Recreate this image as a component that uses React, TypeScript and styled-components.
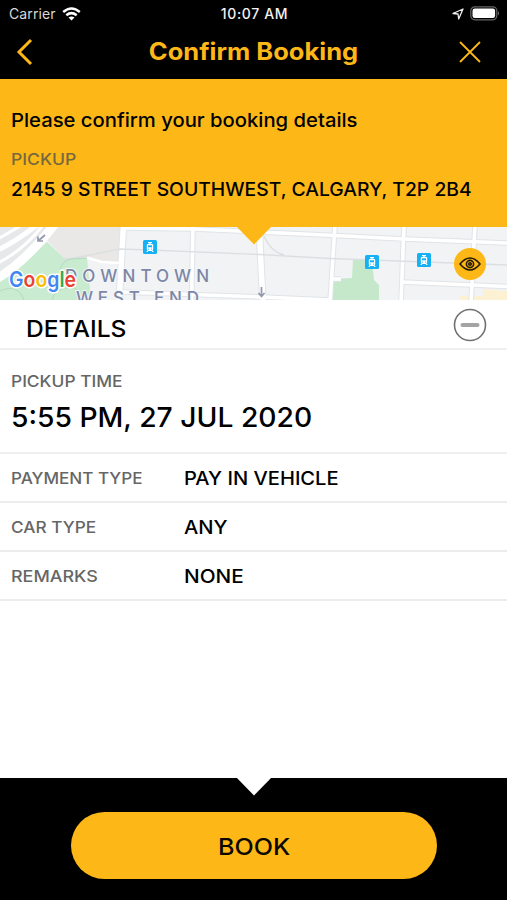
import styled, { createGlobalStyle } from "styled-components";

const YELLOW = "#fdb817";

const GlobalStyle = createGlobalStyle`
  * { box-sizing: border-box; }
  body { margin: 0; background: #fff; }
`;

const Screen = styled.div`
  width: 507px;
  height: 900px;
  display: flex;
  flex-direction: column;
  overflow: hidden;
  background: #fff;
  color: #000;
  font-family: Inter, "Liberation Sans", sans-serif;
`;

const Label = styled.span<{
  $size: number;
  $track?: number;
  $stretch?: number;
  $center?: boolean;
  $weight?: number;
  $color?: string;
}>`
  display: inline-block;
  font-size: ${(p) => p.$size}px;
  line-height: 24px;
  font-weight: ${(p) => p.$weight ?? 500};
  letter-spacing: ${(p) => p.$track ?? 0}px;
  color: ${(p) => p.$color ?? "inherit"};
  transform: scaleX(${(p) => p.$stretch ?? 1});
  transform-origin: ${(p) => (p.$center ? "center" : "left")};
  white-space: nowrap;
`;

const Header = styled.header`
  height: 79px;
  flex: none;
  background: #000;
`;

const StatusBar = styled.div`
  height: 27px;
  padding: 0 7px 0 9px;
  display: grid;
  grid-template-columns: 1fr auto 1fr;
  align-items: center;
  color: #f2f2f2;
`;

const StatusGroup = styled.div<{ $end?: boolean }>`
  display: flex;
  align-items: center;
  gap: 6px;
  justify-content: ${(p) => (p.$end ? "flex-end" : "flex-start")};
`;

const TitleBar = styled.div`
  height: 50px;
  padding: 0 26px 0 15px;
  display: grid;
  grid-template-columns: 60px 1fr 49px;
  align-items: center;
  text-align: center;
`;

const IconButton = styled.button<{ $end?: boolean }>`
  border: 0;
  padding: 0;
  background: none;
  display: flex;
  justify-content: ${(p) => (p.$end ? "flex-end" : "flex-start")};
`;

const Summary = styled.section`
  position: relative;
  z-index: 1;
  height: 148px;
  flex: none;
  padding: 30px 11px 0;
  background: ${YELLOW};
  display: flex;
  flex-direction: column;
  align-items: flex-start;
`;

const SummaryGap = styled.div<{ $h: number }>`
  height: ${(p) => p.$h}px;
`;

const Notch = styled.svg<{ $top: number }>`
  position: absolute;
  top: ${(p) => p.$top}px;
  left: 236px;
`;

const MapStrip = styled.section`
  position: relative;
  height: 73px;
  flex: none;
  overflow: hidden;
  svg { display: block; }
`;

const EyeButton = styled.button`
  position: absolute;
  left: 454px;
  top: 21px;
  width: 32px;
  height: 32px;
  padding: 0;
  border: 0;
  border-radius: 50%;
  background: ${YELLOW};
  display: grid;
  place-items: center;
`;

const DetailsBar = styled.div`
  height: 50px;
  flex: none;
  padding: 8px 20px 0 26px;
  border-bottom: 2px solid #f0f0f0;
  display: flex;
  justify-content: space-between;
  align-items: flex-start;
`;

const DetailsTitle = styled.h2`
  margin: 0;
  padding-top: 9px;
  display: flex;
`;

const PickupTime = styled.div`
  height: 104px;
  flex: none;
  padding: 19px 11px 0;
  border-bottom: 2px solid #efefef;
  display: flex;
  flex-direction: column;
  align-items: flex-start;
  gap: 12px;
`;

const Row = styled.div`
  height: 49px;
  flex: none;
  padding: 1px 11px 0;
  border-bottom: 2px solid #ececec;
  display: grid;
  grid-template-columns: 173px 1fr;
  align-items: center;
  justify-items: start;
`;

const Spacer = styled.div`
  flex: 1;
`;

const Footer = styled.footer`
  position: relative;
  height: 122px;
  flex: none;
  padding: 34px 70px 21px 71px;
  background: #000;
  display: flex;
`;

const BookButton = styled.button`
  flex: 1;
  border: 0;
  padding: 3px 0 0;
  border-radius: 34px;
  background: ${YELLOW};
  color: #0a0800;
  font-family: inherit;
`;

const Roads = styled.g<{ $grow: number; $c: string }>`
  fill: none;
  stroke: ${(p) => p.$c};
  stroke-width: ${(p) => 3.6 + p.$grow}px;
  .wide { stroke-width: ${(p) => 5.5 + p.$grow}px; }
`;

const MapText = styled.text`
  font: 500 17px Inter, sans-serif;
  fill: #7d86a5;
  stroke: #f4f6f8;
  stroke-width: 2px;
  paint-order: stroke;
`;

const LogoText = styled.text`
  font: 600 21.5px Inter, sans-serif;
  stroke: #fff;
  stroke-width: 3px;
  stroke-linejoin: round;
  paint-order: stroke;
`;

const Station = ({ x, y }: { x: number; y: number }) => (
  <g transform={`translate(${x} ${y})`}>
    <rect width="14" height="14" rx="1.5" fill="#16b0f4" />
    <path d="M5 2h4v1.2H7.6V4H9.6l.6 1v4.3L9.5 10.3l1.2 1.7H9.3l-.6-1H5.3l-.6 1H3.3l1.2-1.7-.7-1V5l.6-1h2V3.2H5z" fill="#fff" />
    <path d="M5 5.3h4v2H5z" fill="#16b0f4" />
    <circle cx="5.5" cy="9" r=".6" fill="#16b0f4" />
    <circle cx="8.5" cy="9" r=".6" fill="#16b0f4" />
  </g>
);

const roadLines = (
  <>
    <path d="M124 1L194 2L260 5L335 8.500L404 12L507 16" />
    <path d="M193 -2L191.500 76M335 -2L330 76M404 -2L401 76M475 -2L471 76" />
    <path d="M121 65L262 70L330 73M402 55L507 59.500M332 52H341" />
    <path className="wide" d="M123.500 -2L119 76M259 -2L263 76" />
  </>
);

const CityMap = () => (
  <svg width="507" height="73" viewBox="0 0 507 73">
    <rect width="507" height="73" fill="#f1f3f4" />
    <path d="M0 0H121V36L103 35L88 31L64 31L48 14L40 0Z" fill="#e9e8e6" />
    <path d="M0 0H55L47 13L22 36L0 56Z" fill="#e7e8ea" />
    <path d="M47 15L64 31L87 31L91 73H0V53L22 36Z" fill="#c9ebcf" />
    <path d="M353 33H372L374 53L379 58V73H333V52L352 51Z" fill="#c5e8cb" />
    <path d="M483 62L507 64V73H459V69H483Z" fill="#fcf2d3" />
    <Roads $grow={2} $c="#e0e4e8">{roadLines}</Roads>
    <Roads $grow={0} $c="#ffffff">{roadLines}</Roads>
    <g fill="none" stroke="#fff" strokeLinecap="round">
      <path d="M-2 51Q25 35 54 -2" strokeWidth="9" />
      <path d="M-2 23Q15 15 37 -2" strokeWidth="5" />
      <path d="M-2 36Q25 22 43 -2M-2 12L22 -2" strokeWidth="3" />
      <path d="M88 31L102 35L119 36" strokeWidth="2.5" />
    </g>
    <g fill="none" stroke="#dcdfe1" strokeWidth="1.3">
      <path d="M62 33L85 29L120 22L150 23L260 27.500L330 31.500L507 38" />
      <path d="M264 9Q271 25 284 28" />
    </g>
    <g fill="none" stroke="#b2dcbb" strokeWidth="1">
      <path d="M0 64Q18 56 24 73M60 46Q60 34 71 32L87 31M52 73Q54 62 71 60Q80 61 81 73" />
    </g>
    <g fill="none" stroke="#9299ac" strokeWidth="1.7">
      <path d="M45 8L38 14M38 9.500V14H43M261.500 60V70M258.500 66L261.500 69.500L264.500 66" />
    </g>
    <Station x={143} y={13} />
    <Station x={365} y={28} />
    <Station x={417} y={26} />
    <MapText x="65" y="55" textLength="144">DOWNTOWN</MapText>
    <MapText x="76" y="76.500" textLength="123">WEST END</MapText>
    <LogoText x="9" y="59.500" textLength="67" lengthAdjust="spacingAndGlyphs">
      <tspan fill="#4285f4">G</tspan>
      <tspan fill="#ea4335">o</tspan>
      <tspan fill="#fbbc05">o</tspan>
      <tspan fill="#4285f4">g</tspan>
      <tspan fill="#34a853">l</tspan>
      <tspan fill="#ea4335">e</tspan>
    </LogoText>
  </svg>
);

const rows = [
  { label: "PAYMENT TYPE", labelStretch: 1.068, value: "PAY IN VEHICLE", valueStretch: 1.087 },
  { label: "CAR TYPE", labelStretch: 1.075, value: "ANY", valueStretch: 1.09 },
  { label: "REMARKS", labelStretch: 1.12, value: "NONE", valueStretch: 1.12 },
];

export default function App() {
  return (
    <Screen>
      <GlobalStyle />
      <Header>
        <StatusBar>
          <StatusGroup>
            <Label $size={14} $track={0.1} $weight={400} $color="#d8d8d8">Carrier</Label>
            <svg width="19" height="14" viewBox="0 0 19 14" fill="none" stroke="#fff" strokeWidth="2.500">
              <path d="M1.200 5Q9.500 -2 17.800 5M4.300 8.300Q9.500 4 14.700 8.300" />
              <path d="M6.500 10.600Q9.500 8.200 12.500 10.600L9.500 13.600Z" fill="#fff" stroke="none" />
            </svg>
          </StatusGroup>
          <Label $size={14} $track={0.65}>10:07 AM</Label>
          <StatusGroup $end>
            <svg width="12" height="12" viewBox="0 0 12 12" fill="none" stroke="#eee" strokeWidth="1.300" strokeLinejoin="round">
              <path d="M1 5.500L11 1L6.700 11L6 6Z" />
            </svg>
            <svg width="30" height="15" viewBox="0 0 30 15">
              <rect x=".8" y=".8" width="26" height="13" rx="4" fill="none" stroke="#666" strokeWidth="1.200" />
              <rect x="2.500" y="2.500" width="22.600" height="9.600" rx="2.300" fill="#fff" />
              <path d="M28 5Q30 7.300 28 9.600Z" fill="#777" />
            </svg>
          </StatusGroup>
        </StatusBar>
        <TitleBar>
          <IconButton aria-label="Back">
            <svg width="18" height="28" viewBox="0 0 18 28" fill="none" stroke={YELLOW} strokeWidth="3">
              <path d="M16 2L4 14L16 26" />
            </svg>
          </IconButton>
          <Label $size={24} $stretch={1.062} $center $weight={700} $color={YELLOW}>Confirm Booking</Label>
          <IconButton $end aria-label="Close">
            <svg width="22" height="22" viewBox="0 0 22 22" fill="none" stroke={YELLOW} strokeWidth="1.800">
              <path d="M1 1L21 21M21 1L1 21" />
            </svg>
          </IconButton>
        </TitleBar>
      </Header>
      <Summary>
        <Label $size={19} $stretch={1.065}>Please confirm your booking details</Label>
        <SummaryGap $h={14} />
        <Label $size={16} $stretch={1.1} $color="#77683f">PICKUP</Label>
        <SummaryGap $h={6} />
        <Label $size={18.5} $stretch={1.044}>2145 9 STREET SOUTHWEST, CALGARY, T2P 2B4</Label>
        <Notch $top={147} width="36" height="19" viewBox="0 0 36 19">
          <path d="M0 0H36L18 18.500Z" fill={YELLOW} />
        </Notch>
      </Summary>
      <MapStrip>
        <CityMap />
        <EyeButton aria-label="Preview">
          <svg width="22" height="14" viewBox="0 0 22 14" fill="none" stroke="#241a00" strokeWidth="1.600">
            <path d="M1 7Q11 -5 21 7Q11 19 1 7Z" />
            <circle cx="11" cy="7" r="3.600" />
            <circle cx="11" cy="7" r="1.300" />
          </svg>
        </EyeButton>
      </MapStrip>
      <DetailsBar>
        <DetailsTitle><Label $size={23} $stretch={1.07}>DETAILS</Label></DetailsTitle>
        <svg width="34" height="34" viewBox="0 0 34 34" fill="none">
          <circle cx="17" cy="17" r="15.500" stroke="#707070" strokeWidth="1.600" />
          <path d="M9.500 17H24.500" stroke="#a4a4a4" strokeWidth="4" strokeLinecap="round" />
        </svg>
      </DetailsBar>
      <PickupTime>
        <Label $size={16} $stretch={1.085} $color="#666">PICKUP TIME</Label>
        <Label $size={27.5} $stretch={1.027}>5:55 PM, 27 JUL 2020</Label>
      </PickupTime>
      {rows.map((r) => (
        <Row key={r.label}>
          <Label $size={16} $stretch={r.labelStretch} $color="#666">{r.label}</Label>
          <Label $size={18.5} $stretch={r.valueStretch}>{r.value}</Label>
        </Row>
      ))}
      <Spacer />
      <Footer>
        <Notch $top={-1} width="36" height="19" viewBox="0 0 36 19">
          <path d="M0 0H36L18 18.500Z" fill="#fff" />
        </Notch>
        <BookButton><Label $size={23} $stretch={1.09} $center>BOOK</Label></BookButton>
      </Footer>
    </Screen>
  );
}
